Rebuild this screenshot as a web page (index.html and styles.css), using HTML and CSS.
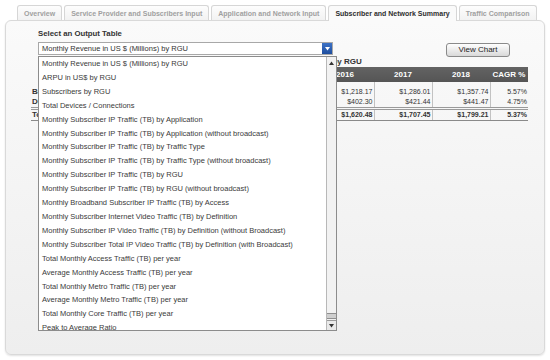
FILE: index.html
```html
<!DOCTYPE html>
<html lang="en">
<head>
<meta charset="utf-8">
<title>Subscriber and Network Summary</title>
<link rel="stylesheet" href="styles.css">
</head>
<body>
<div class="tabs">
  <div class="tab">Overview</div>
  <div class="tab">Service Provider and Subscribers Input</div>
  <div class="tab">Application and Network Input</div>
  <div class="tab active">Subscriber and Network Summary</div>
  <div class="tab">Traffic Comparison</div>
</div>
<div class="panel">
  <div class="controls">
    <div class="picker">
      <div class="picker-label">Select an Output Table</div>
      <div class="select">
        <span class="select-text">Monthly Revenue in US $ (Millions) by RGU</span>
        <span class="select-btn"><svg width="5" height="4" viewBox="0 0 5 4"><path d="M0 0H5L2.5 3.5Z" fill="#fff"/></svg></span>
      </div>
      <div class="dropdown">
        <ul class="options">
          <li>Monthly Revenue in US $ (Millions) by RGU</li>
          <li>ARPU in US$ by RGU</li>
          <li>Subscribers by RGU</li>
          <li>Total Devices / Connections</li>
          <li>Monthly Subscriber IP Traffic (TB) by Application</li>
          <li>Monthly Subscriber IP Traffic (TB) by Application (without broadcast)</li>
          <li>Monthly Subscriber IP Traffic (TB) by Traffic Type</li>
          <li>Monthly Subscriber IP Traffic (TB) by Traffic Type (without broadcast)</li>
          <li>Monthly Subscriber IP Traffic (TB) by RGU</li>
          <li>Monthly Subscriber IP Traffic (TB) by RGU (without broadcast)</li>
          <li>Monthly Broadband Subscriber IP Traffic (TB) by Access</li>
          <li>Monthly Subscriber Internet Video Traffic (TB) by Definition</li>
          <li>Monthly Subscriber IP Video Traffic (TB) by Definition (without Broadcast)</li>
          <li>Monthly Subscriber Total IP Video Traffic (TB) by Definition (with Broadcast)</li>
          <li>Total Monthly Access Traffic (TB) per year</li>
          <li>Average Monthly Access Traffic (TB) per year</li>
          <li>Total Monthly Metro Traffic (TB) per year</li>
          <li>Average Monthly Metro Traffic (TB) per year</li>
          <li>Total Monthly Core Traffic (TB) per year</li>
          <li>Peak to Average Ratio</li>
        </ul>
        <div class="scrollbar">
          <div class="sb-up"><svg width="5" height="4" viewBox="0 0 5 4"><path d="M0 4H5L2.5 0.5Z" fill="#333"/></svg></div>
          <div class="sb-track"><div class="sb-thumb"></div></div>
          <div class="sb-down"><svg width="5" height="4" viewBox="0 0 5 4"><path d="M0 0H5L2.5 3.5Z" fill="#333"/></svg></div>
        </div>
      </div>
    </div>
    <button class="view-btn">View Chart</button>
  </div>
  <div class="report">
    <div class="report-title">Monthly Revenue in US $ (Millions) by RGU</div>
    <table class="data">
      <colgroup>
        <col class="c-label"><col class="c-year"><col class="c-year"><col class="c-year"><col class="c-cagr">
      </colgroup>
      <thead>
        <tr><th class="blank"></th><th>2016</th><th>2017</th><th>2018</th><th>CAGR %</th></tr>
      </thead>
      <tbody>
        <tr class="first"><td class="label">Broadband</td><td>$1,218.17</td><td>$1,286.01</td><td>$1,357.74</td><td>5.57%</td></tr>
        <tr class="second"><td class="label">Digital TV</td><td>$402.30</td><td>$421.44</td><td>$441.47</td><td>4.75%</td></tr>
        <tr class="total"><td class="label">Total</td><td>$1,620.48</td><td>$1,707.45</td><td>$1,799.21</td><td>5.37%</td></tr>
      </tbody>
    </table>
  </div>
</div>
</body>
</html>
```

FILE: styles.css
```css
html, body {
  margin: 0;
  padding: 0;
}
body {
  width: 550px;
  height: 360px;
  overflow: hidden;
  background: #ffffff;
  font-family: "Liberation Sans", Arial, Helvetica, sans-serif;
  color: #333;
}

/* Tabs */
.tabs {
  display: flex;
  gap: 2px;
  padding: 5px 0 0 17px;
  height: 15px;
}
.tab {
  position: relative;
  height: 15px;
  box-sizing: border-box;
  padding: 0 6px;
  border: 1px solid #d6d6d6;
  border-bottom: none;
  border-radius: 3px 3px 0 0;
  background: linear-gradient(#fdfdfd, #f2f2f2);
  color: #a0a0a0;
  font-size: 7px;
  font-weight: bold;
  line-height: 15px;
  white-space: nowrap;
}
.tab.active {
  z-index: 2;
  height: 16px;
  background: #fafafa;
  color: #2e2e2e;
}

/* Panel */
.panel {
  margin: 0 5px;
  height: 335px;
  box-sizing: border-box;
  border: 1px solid #d9d9d9;
  border-radius: 6px;
  background: linear-gradient(#fafafa, #eeeeee);
  box-shadow: 0 1px 2px rgba(0, 0, 0, 0.12);
}

.controls {
  display: flex;
  align-items: flex-start;
  padding: 8px 0 0 32px;
}
.picker {
  position: relative;
  width: 295px;
}
.picker-label {
  font-size: 7.8px;
  font-weight: bold;
  line-height: 10px;
  color: #333;
  margin-bottom: 3px;
}
.select {
  display: flex;
  align-items: center;
  height: 13px;
  box-sizing: border-box;
  border: 1px solid #a8a8a8;
  background: #fff;
}
.select-text {
  flex: 1;
  padding-left: 3px;
  font-size: 7.5px;
  color: #333;
  white-space: nowrap;
}
.select-btn {
  align-self: stretch;
  width: 10px;
  display: flex;
  align-items: center;
  justify-content: center;
  background: linear-gradient(#3d72c6, #1f4e9e);
}

.dropdown {
  position: absolute;
  left: 0;
  top: 100%;
  margin-top: 1px;
  z-index: 5;
  display: flex;
  width: 299px;
  height: 275px;
  box-sizing: border-box;
  border: 1px solid #8c8c8c;
  background: #fff;
}
.options {
  flex: 1;
  margin: 0;
  padding: 0 0 0 3px;
  list-style: none;
  overflow: hidden;
}
.options li {
  font-size: 7.5px;
  line-height: 13.9px;
  color: #3a3a3a;
  white-space: nowrap;
}
.scrollbar {
  width: 9px;
  border-left: 1px solid #b8b8b8;
  background: #f2f2f2;
  display: flex;
  flex-direction: column;
}
.sb-up {
  height: 11px;
  display: flex;
  align-items: center;
  justify-content: center;
}
.sb-track {
  flex: 1;
  display: flex;
  flex-direction: column;
  justify-content: flex-end;
}
.sb-thumb {
  height: 4px;
  border-top: 1px solid #8f8f8f;
  border-bottom: 1px solid #8f8f8f;
  background: #cfcfcf;
  margin-bottom: 1px;
}
.sb-down {
  height: 9px;
  border-top: 1px solid #9a9a9a;
  background: #e9e9e9;
  display: flex;
  align-items: center;
  justify-content: center;
}

.view-btn {
  width: 64px;
  height: 14px;
  margin: 14px 0 0 113px;
  padding: 0;
  box-sizing: border-box;
  border: 1px solid #8a8a8a;
  border-radius: 3px;
  background: linear-gradient(#fefefe, #d9d9d9);
  font-family: "Liberation Sans", Arial, sans-serif;
  font-size: 8px;
  line-height: 12px;
  color: #222;
}

/* Report table */
.report {
  padding: 0 0 0 25px;
}
.report-title {
  width: 497px;
  text-align: center;
  font-size: 8px;
  font-weight: bold;
  line-height: 10px;
  color: #333;
}
.data {
  width: 497px;
  border-collapse: collapse;
  table-layout: fixed;
}
.c-label { width: 285px; }
.c-year { width: 58px; }
.c-cagr { width: 38px; }
.data th {
  height: 15px;
  padding: 0;
  background: linear-gradient(#636363, #555555);
  color: #fff;
  font-size: 8px;
  font-weight: bold;
  text-align: center;
}
.data th.blank {
  background: transparent;
}
.data td {
  padding: 0 1px 0 0;
  border-left: 1px solid #c2c2c2;
  font-size: 7px;
  line-height: 11px;
  text-align: right;
  color: #333;
  white-space: nowrap;
}
.data td.label {
  border-left: none;
  padding-left: 1px;
  text-align: left;
  font-size: 8px;
  font-weight: bold;
}
.data tr.first td {
  padding-top: 4px;
}
.data tr.second td {
  line-height: 10px;
}
.data tr.total td {
  border-top: 3px double #9a9a9a;
  border-bottom: 1px solid #8a8a8a;
  line-height: 10px;
  font-weight: bold;
}
```
